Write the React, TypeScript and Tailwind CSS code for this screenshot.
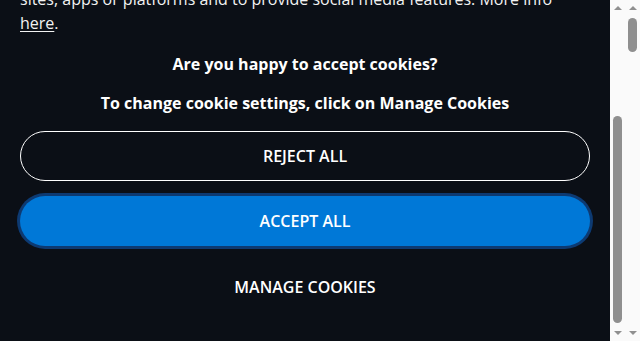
import React from "react";

// classic scrollbar drawn by hand: track, two arrows and a thumb
function Scrollbar({ thumb }: { thumb: string }) {
	return (
		<div className="flex w-[15px] shrink-0 flex-col items-center bg-[#fafafa] py-[6px]">
			<svg width="8" height="4" viewBox="0 0 8 4">
				<path d="M4 0 L8 4 L0 4 Z" fill="#8f8f8f" />
			</svg>
			<div className={thumb} />
			<svg width="8" height="4" viewBox="0 0 8 4" className="mt-auto">
				<path d="M0 0 L8 0 L4 4 Z" fill="#8f8f8f" />
			</svg>
		</div>
	);
}

export default function App() {
	return (
		<div className="flex h-[341px] overflow-hidden font-['Open_Sans',sans-serif]">
			{/* banner body, shown scrolled down to the buttons */}
			<div className="flex min-w-0 flex-1 flex-col justify-end overflow-hidden bg-[#0b0f16] text-white">
				<div className="shrink-0 px-5 pt-5 pb-[29px]">
					<h2 className="mb-4 text-[22px] leading-[30px] font-bold">Cookies</h2>
					<p className="text-base leading-6 text-[#f2f2f2]">
						We use cookies and similar technologies to make our website work, to
						understand how you use it and to improve your experience. Some cookies
						are set by us and some by third parties we work with. We and our
						partners also use cookies to show you personalised content and
						advertising, to measure the performance of our campaigns, to
						understand your interests across other websites, apps or services, and
						to remember your choices when you visit other <br />
						sites, apps or platforms and to provide social media features. More info
						<br />
						<a href="#" className="underline underline-offset-2">
							here
						</a>
						.
					</p>

					<p className="mt-[17px] text-center text-base leading-6 font-bold">
						Are you happy to accept cookies?
					</p>
					<p className="mt-[15px] text-center text-base leading-6 font-bold">
						To change cookie settings, click on Manage Cookies
					</p>

					<div className="mt-4 flex flex-col">
						<button className="h-[50px] w-full rounded-full border border-white text-base font-semibold uppercase">
							Reject all
						</button>
						<button className="mt-[15px] h-[50px] w-full rounded-full bg-[#0078d7] text-base font-semibold uppercase ring-[3px] ring-[#0d3a72]">
							Accept all
						</button>
						<button className="mt-4 h-[50px] w-full rounded-full text-base font-semibold uppercase">
							Manage cookies
						</button>
					</div>
				</div>
			</div>

			<Scrollbar thumb="mt-[106px] h-[207px] w-[9px] rounded-full bg-[#8f8f8f]" />
			<Scrollbar thumb="mt-[8px] h-[34px] w-[9px] rounded-full bg-[#8f8f8f]" />
		</div>
	);
}
